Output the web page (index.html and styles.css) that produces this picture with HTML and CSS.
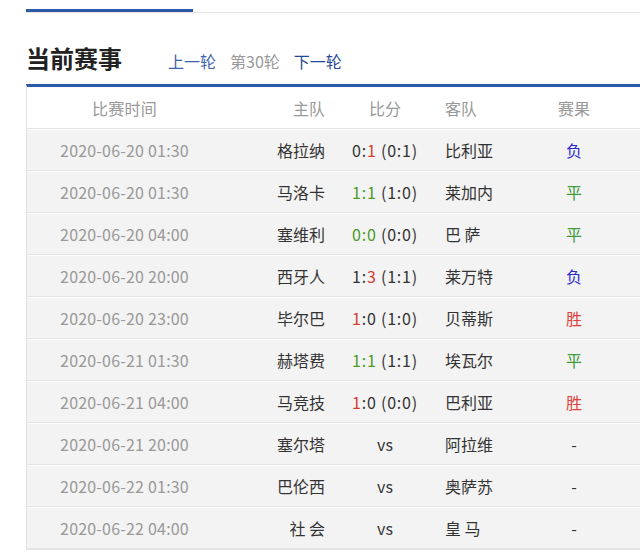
FILE: index.html
```html
<!DOCTYPE html>
<html lang="zh-CN">
<head>
<meta charset="utf-8">
<link rel="stylesheet" href="styles.css">
</head>
<body>
<div class="page">
  <div class="tabbar"><div class="tab-active"></div></div>
  <div class="title-row">
    <h2 class="title">当前赛事</h2>
    <div class="rounds">
      <a class="prev">上一轮</a>
      <span class="cur">第30轮</span>
      <a class="next">下一轮</a>
    </div>
  </div>
  <div class="table">
    <div class="row head">
      <div class="c-time">比赛时间</div>
      <div class="c-home">主队</div>
      <div class="c-score">比分</div>
      <div class="c-away">客队</div>
      <div class="c-res">赛果</div>
    </div>
    <div class="row">
      <div class="c-time">2020-06-20 01:30</div>
      <div class="c-home">格拉纳</div>
      <div class="c-score num">0:<span class="red">1</span> (0:1)</div>
      <div class="c-away">比利亚</div>
      <div class="c-res lose">负</div>
    </div>
    <div class="row">
      <div class="c-time">2020-06-20 01:30</div>
      <div class="c-home">马洛卡</div>
      <div class="c-score num"><span class="green">1:1</span> (1:0)</div>
      <div class="c-away">莱加内</div>
      <div class="c-res draw">平</div>
    </div>
    <div class="row">
      <div class="c-time">2020-06-20 04:00</div>
      <div class="c-home">塞维利</div>
      <div class="c-score num"><span class="green">0:0</span> (0:0)</div>
      <div class="c-away">巴 萨</div>
      <div class="c-res draw">平</div>
    </div>
    <div class="row">
      <div class="c-time">2020-06-20 20:00</div>
      <div class="c-home">西牙人</div>
      <div class="c-score num">1:<span class="red">3</span> (1:1)</div>
      <div class="c-away">莱万特</div>
      <div class="c-res lose">负</div>
    </div>
    <div class="row">
      <div class="c-time">2020-06-20 23:00</div>
      <div class="c-home">毕尔巴</div>
      <div class="c-score num"><span class="red">1</span>:0 (1:0)</div>
      <div class="c-away">贝蒂斯</div>
      <div class="c-res win">胜</div>
    </div>
    <div class="row">
      <div class="c-time">2020-06-21 01:30</div>
      <div class="c-home">赫塔费</div>
      <div class="c-score num"><span class="green">1:1</span> (1:1)</div>
      <div class="c-away">埃瓦尔</div>
      <div class="c-res draw">平</div>
    </div>
    <div class="row">
      <div class="c-time">2020-06-21 04:00</div>
      <div class="c-home">马竞技</div>
      <div class="c-score num"><span class="red">1</span>:0 (0:0)</div>
      <div class="c-away">巴利亚</div>
      <div class="c-res win">胜</div>
    </div>
    <div class="row">
      <div class="c-time">2020-06-21 20:00</div>
      <div class="c-home">塞尔塔</div>
      <div class="c-score">vs</div>
      <div class="c-away">阿拉维</div>
      <div class="c-res">-</div>
    </div>
    <div class="row">
      <div class="c-time">2020-06-22 01:30</div>
      <div class="c-home">巴伦西</div>
      <div class="c-score">vs</div>
      <div class="c-away">奥萨苏</div>
      <div class="c-res">-</div>
    </div>
    <div class="row">
      <div class="c-time">2020-06-22 04:00</div>
      <div class="c-home">社 会</div>
      <div class="c-score">vs</div>
      <div class="c-away">皇 马</div>
      <div class="c-res">-</div>
    </div>
  </div>
</div>
</body>
</html>
```

FILE: styles.css
```css
html, body {
  margin: 0;
  padding: 0;
  background: #fff;
}
body {
  font-family: "Noto Sans CJK SC", "Liberation Sans", sans-serif;
  color: #333;
  overflow: hidden;
}
.page {
  padding: 9px 0 0 26px;
}
.tabbar {
  height: 3px;
  border-bottom: 1px solid #e4e4e4;
  display: flex;
}
.tab-active {
  width: 167px;
  height: 3px;
  background: #2d5aa6;
}
.title-row {
  display: flex;
  align-items: center;
  height: 71px;
  padding-top: 19px;
  box-sizing: border-box;
}
.title {
  margin: 0;
  font-size: 24px;
  font-weight: bold;
  color: #222;
  line-height: 30px;
}
.rounds {
  margin-left: 46px;
  font-size: 16px;
  display: flex;
  gap: 14px;
  padding-top: 6px;
}
.prev { color: #3e63ad; }
.cur { color: #999; }
.next { color: #1f4a9c; }
.table {
  border-top: 3px solid #2d5aa6;
  border-left: 1px solid #e2e2e2;
  border-bottom: 1px solid #e2e2e2;
  width: 640px;
}
.row {
  display: grid;
  grid-template-columns: 195px 113px 100px 89px 100px 1fr;
  height: 40px;
  align-items: center;
  font-size: 16px;
  background: #f3f3f3;
  border-top: 1px solid #fdfdfd;
  border-bottom: 1px solid #e3e3e3;
}
.row.head {
  background: #fff;
  color: #999;
  border-top: none;
  height: 41px;
}
.c-time {
  text-align: center;
  color: #999;
  letter-spacing: 0.2px;
}
.c-home {
  text-align: right;
  padding-right: 10px;
}
.c-score {
  text-align: center;
}
.num {
  letter-spacing: 0.8px;
}
.c-away {
  padding-left: 10px;
}
.c-res {
  text-align: center;
}
.head .c-home, .head .c-score, .head .c-away, .head .c-res { color: #999; }
.red { color: #d93a2f; }
.green { color: #4c9a2a; }
.lose { color: #2a2ad0; }
.draw { color: #3f9a3a; }
.win { color: #e0423a; }
```
